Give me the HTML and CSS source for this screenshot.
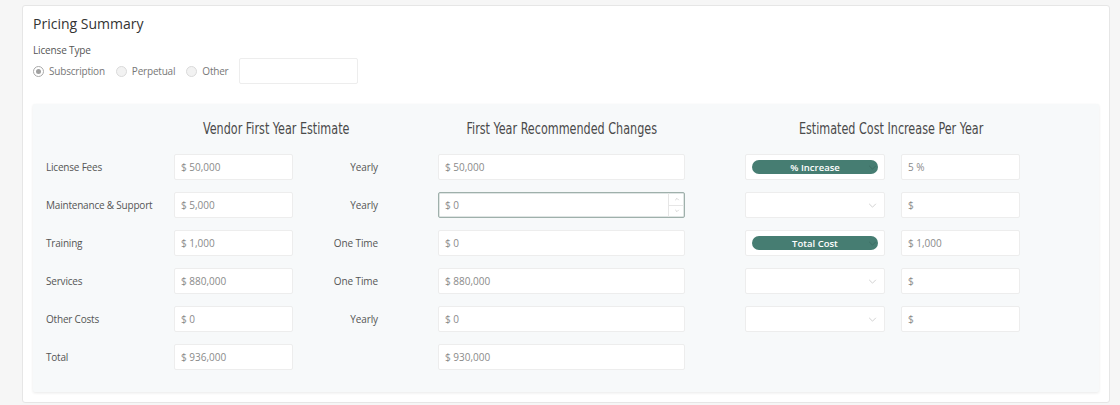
FILE: index.html
```html
<!DOCTYPE html>
<html>
<head>
<meta charset="utf-8">
<link rel="stylesheet" href="styles.css">
</head>
<body>
<div class="page">
  <div class="card">
    <h2 class="title">Pricing Summary</h2>
    <div class="field-label">License Type</div>
    <div class="radios">
      <span class="radio checked"></span><span class="radio-text">Subscription</span>
      <span class="radio"></span><span class="radio-text">Perpetual</span>
      <span class="radio"></span><span class="radio-text">Other</span>
      <div class="box other-box"></div>
    </div>
    <div class="panel">
      <div class="grid">
        <div class="head head1"><span class="head-text">Vendor First Year Estimate</span></div>
        <div class="head head2"><span class="head-text">First Year Recommended Changes</span></div>
        <div class="head head3"><span class="head-text">Estimated Cost Increase Per Year</span></div>

        <div class="lbl">License Fees</div>
        <div class="box c-in1">$ 50,000</div>
        <div class="freq">Yearly</div>
        <div class="box c-in2">$ 50,000</div>
        <div class="box c-sel"><span class="pill">% Increase</span><svg class="chev on-pill" viewBox="0 0 10 6"><path d="M1 1 L5 5 L9 1"/></svg></div>
        <div class="box c-in3">5 %</div>

        <div class="lbl">Maintenance &amp; Support</div>
        <div class="box c-in1">$ 5,000</div>
        <div class="freq">Yearly</div>
        <div class="box c-in2 focused">$ 0<span class="spin"><span class="spin-btn"><svg viewBox="0 0 10 6"><path d="M2 5 L5 2 L8 5"/></svg></span><span class="spin-btn"><svg viewBox="0 0 10 6"><path d="M2 1 L5 4 L8 1"/></svg></span></span></div>
        <div class="box c-sel"><svg class="chev" viewBox="0 0 10 6"><path d="M1 1 L5 5 L9 1"/></svg></div>
        <div class="box c-in3">$</div>

        <div class="lbl">Training</div>
        <div class="box c-in1">$ 1,000</div>
        <div class="freq">One Time</div>
        <div class="box c-in2">$ 0</div>
        <div class="box c-sel"><span class="pill">Total Cost</span><svg class="chev on-pill" viewBox="0 0 10 6"><path d="M1 1 L5 5 L9 1"/></svg></div>
        <div class="box c-in3">$ 1,000</div>

        <div class="lbl">Services</div>
        <div class="box c-in1">$ 880,000</div>
        <div class="freq">One Time</div>
        <div class="box c-in2">$ 880,000</div>
        <div class="box c-sel"><svg class="chev" viewBox="0 0 10 6"><path d="M1 1 L5 5 L9 1"/></svg></div>
        <div class="box c-in3">$</div>

        <div class="lbl">Other Costs</div>
        <div class="box c-in1">$ 0</div>
        <div class="freq">Yearly</div>
        <div class="box c-in2">$ 0</div>
        <div class="box c-sel"><svg class="chev" viewBox="0 0 10 6"><path d="M1 1 L5 5 L9 1"/></svg></div>
        <div class="box c-in3">$</div>

        <div class="lbl">Total</div>
        <div class="box c-in1">$ 936,000</div>
        <div class="freq"></div>
        <div class="box c-in2">$ 930,000</div>
      </div>
    </div>
  </div>
</div>
</body>
</html>
```

FILE: styles.css
```css
html, body {
  margin: 0;
  padding: 0;
  background: #f6f6f6;
  font-family: "Open Sans", "Liberation Sans", sans-serif;
  color: #444;
}

.page {
  padding: 5px 10px 2px 22px;
}

.card {
  width: 1088px;
  box-sizing: border-box;
  background: #fff;
  border: 1px solid #e6e6e6;
  border-radius: 3px;
  padding: 7px 10px 10px;
}

.title {
  margin: 0;
  font-size: 14px;
  font-weight: 400;
  line-height: 22px;
  color: #333;
}

.field-label {
  margin-top: 8px;
  font-size: 10px;
  letter-spacing: -0.15px;
  line-height: 14px;
  color: #555;
}

.radios {
  display: flex;
  align-items: center;
  height: 26px;
  margin-top: 1px;
}

.radio {
  width: 11px;
  height: 11px;
  box-sizing: border-box;
  border-radius: 50%;
  border: 1px solid #dadada;
  background: #f2f2f2;
  margin-right: 5px;
  position: relative;
}

.radio.checked {
  border-color: #a9a9a9;
  background: #fff;
}

.radio.checked::after {
  content: "";
  position: absolute;
  left: 2px;
  top: 2px;
  width: 5px;
  height: 5px;
  border-radius: 50%;
  background: #a0a0a0;
}

.radio-text {
  font-size: 10px;
  letter-spacing: -0.2px;
  color: #777;
  margin-right: 11px;
}

.box {
  box-sizing: border-box;
  height: 26px;
  background: #fff;
  border: 1px solid #ededed;
  border-radius: 2px;
  font-size: 10px;
  color: #8a8a8a;
  display: flex;
  align-items: center;
  padding-left: 6px;
  position: relative;
}

.other-box {
  width: 119px;
}

.panel {
  margin-top: 20px;
  background: #f7f9fa;
  box-shadow: 0 1px 3px rgba(0, 0, 0, 0.09);
  border-radius: 2px;
  padding: 16px 13px 0;
  height: 288px;
  box-sizing: border-box;
}

.grid {
  display: grid;
  grid-template-columns: 128px 119px 85px 60px 247px 60px 140px 16px 119px;
  grid-template-rows: 22px;
  grid-auto-rows: 26px;
  row-gap: 12px;
  align-items: center;
}

.grid > .head {
  text-align: center;
  white-space: nowrap;
  margin-bottom: 6px;
}

.head-text {
  display: inline-block;
  font-family: "DejaVu Sans Condensed", "Liberation Sans Narrow", sans-serif;
  font-size: 15px;
  color: #4a4a4a;
  transform: scaleX(0.83);
}

.head1 { grid-column: 2 / 4; }
.head2 { grid-column: 5 / 6; }
.head3 { grid-column: 7 / 10; padding-left: 18px; }

.lbl {
  grid-column: 1;
  font-size: 10px;
  letter-spacing: -0.2px;
  color: #555;
}

.c-in1 { grid-column: 2; }
.freq {
  grid-column: 3;
  text-align: right;
  font-size: 10px;
  letter-spacing: -0.1px;
  color: #555;
}
.c-in2 { grid-column: 5; }
.c-sel { grid-column: 7; padding: 0 6px; }
.c-in3 { grid-column: 9; }

.focused {
  border-color: #9fb0ab;
  box-shadow: inset 0 0 0 0.5px #c0ccc9;
  padding-right: 0;
}

.spin {
  position: absolute;
  right: 0;
  top: 0;
  bottom: 0;
  width: 15px;
  display: flex;
  flex-direction: column;
  border-left: 1px solid #e6e6e6;
}

.spin-btn {
  flex: 1;
  display: flex;
  align-items: center;
  justify-content: center;
}

.spin-btn + .spin-btn {
  border-top: 1px solid #e6e6e6;
}

.spin-btn svg {
  width: 6px;
  height: 4px;
  fill: none;
  stroke: #bbb;
  stroke-width: 1;
}

.pill {
  flex: 1;
  height: 14px;
  border-radius: 7px;
  background: #467d72;
  color: #fff;
  font-size: 9.5px;
  font-weight: 600;
  display: flex;
  align-items: center;
  justify-content: center;
}

.chev {
  position: absolute;
  right: 7px;
  top: 10px;
  width: 9px;
  height: 5px;
  fill: none;
  stroke: #c8c8c8;
  stroke-width: 1;
}

.chev.on-pill {
  stroke: #3a6b61;
}
```
